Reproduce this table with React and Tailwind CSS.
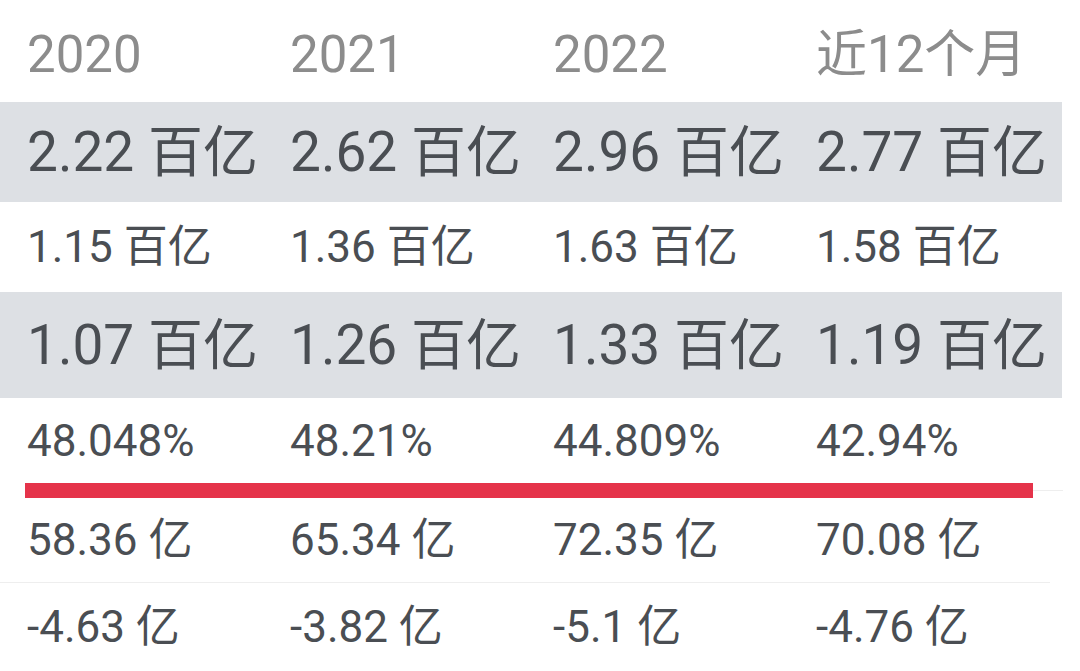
const headers = ['2020', '2021', '2022', '近12个月'];

const rows = [
  { cells: ['2.22 百亿', '2.62 百亿', '2.96 百亿', '2.77 百亿'], shaded: true, h: 'h-[100px]', text: 'text-[55px]' },
  { cells: ['1.15 百亿', '1.36 百亿', '1.63 百亿', '1.58 百亿'], h: 'h-[90px]', text: 'text-[44px]' },
  { cells: ['1.07 百亿', '1.26 百亿', '1.33 百亿', '1.19 百亿'], shaded: true, h: 'h-[106px]', text: 'text-[55px]' },
  { cells: ['48.048%', '48.21%', '44.809%', '42.94%'], h: 'h-[85px]', text: 'text-[44px]' },
];

const tail = [
  ['58.36 亿', '65.34 亿', '72.35 亿', '70.08 亿'],
  ['-4.63 亿', '-3.82 亿', '-5.1 亿', '-4.76 亿'],
];

const Cells = ({ items }) =>
  items.map((c) => (
    <div key={c} className="whitespace-nowrap">
      {c}
    </div>
  ));

export default function App() {
  return (
    <div
      className="w-[1080px] h-[671px] overflow-hidden bg-white text-[#4a4e53] leading-none"
      style={{ fontFamily: 'Roboto, "Noto Sans CJK SC", sans-serif' }}
    >
      {/* header */}
      <div className="h-[102px] pl-[27px] pt-[6px] grid grid-cols-[263px_263px_263px_263px] items-center text-[51px] text-[#8c8c8c]">
        <Cells items={headers} />
      </div>

      {rows.map((r, i) => (
        <div
          key={i}
          className={`${r.h} ${r.text} w-[1062px] pl-[27px] grid grid-cols-[263px_263px_263px_263px] items-center ${
            r.shaded ? 'bg-[#dde0e4]' : 'bg-white'
          }`}
        >
          <Cells items={r.cells} />
        </div>
      ))}

      {/* selected indicator */}
      <div className="flex items-center h-[15px]">
        <div className="ml-[25px] w-[1008px] h-[15px] bg-[#e5334a]" />
        <div className="w-[30px] h-px bg-[#eeeeee]" />
      </div>

      <div className="h-[85px] pl-[27px] grid grid-cols-[263px_263px_263px_263px] items-center text-[44px] border-b border-[#eeeeee] w-[1050px]">
        <Cells items={tail[0]} />
      </div>
      <div className="h-[87px] pl-[27px] grid grid-cols-[263px_263px_263px_263px] items-center text-[44px]">
        <Cells items={tail[1]} />
      </div>
    </div>
  );
}
